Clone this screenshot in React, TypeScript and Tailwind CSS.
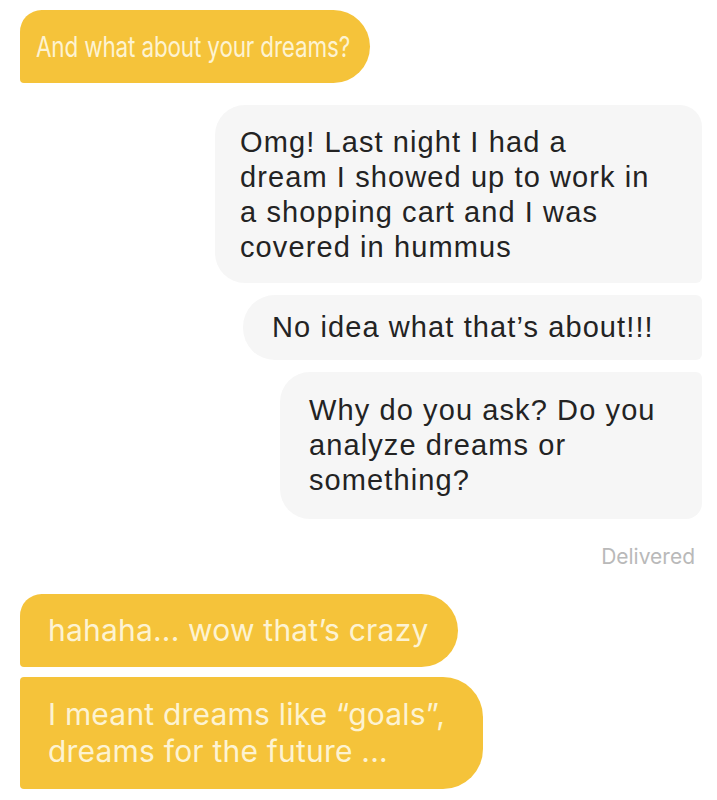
import React from "react";

const yellowText = "text-[#fdf3d2] font-['Inter',sans-serif]";
const grayText = "text-[#232323] font-['Liberation_Sans',Arial,sans-serif] tracking-[1.1px]";

function Lines({ lines }: { lines: string[] }) {
  return (
    <>
      {lines.map((l, i) => (
        <span key={i} className="block whitespace-nowrap">
          {l}
        </span>
      ))}
    </>
  );
}

export default function App() {
  return (
    <div className="w-[717px] h-[800px] bg-white overflow-hidden flex flex-col">
      {/* their question */}
      <div
        className={`ml-[20px] mt-[10px] w-[350px] h-[73px] bg-[#f5c33a] rounded-tl-[22px] rounded-bl-[4px] rounded-r-[37px] pl-[16px] flex items-center text-[29px] ${yellowText}`}
      >
        <span className="inline-block whitespace-nowrap origin-left scale-x-[0.775] tracking-[-0.2px]">
          And what about your dreams?
        </span>
      </div>

      {/* my replies */}
      <div className="flex flex-col items-end mr-[15px] mt-[22px] gap-[12px]">
        <div
          className={`w-[487px] h-[178px] bg-[#f6f6f6] rounded-l-[30px] rounded-tr-[22px] rounded-br-[6px] pl-[25px] pt-[2px] flex flex-col justify-center text-[29px] leading-[35px] ${grayText}`}
        >
          <Lines
            lines={[
              "Omg! Last night I had a",
              "dream I showed up to work in",
              "a shopping cart and I was",
              "covered in hummus",
            ]}
          />
        </div>
        <div
          className={`w-[459px] h-[65px] bg-[#f6f6f6] rounded-l-[32px] rounded-r-[6px] pl-[29px] flex items-center text-[29px] ${grayText}`}
        >
          No idea what that’s about!!!
        </div>
        <div
          className={`w-[422px] h-[147px] bg-[#f6f6f6] rounded-l-[30px] rounded-tr-[6px] rounded-br-[16px] pl-[29px] flex flex-col justify-center text-[29px] leading-[35px] ${grayText}`}
        >
          <Lines
            lines={[
              "Why do you ask? Do you",
              "analyze dreams or",
              "something?",
            ]}
          />
        </div>
      </div>
      <div className="flex justify-end pr-[22px] mt-[24px] text-[21px] leading-[28px] text-[#b9b9b9] font-['Inter',sans-serif]">
        Delivered
      </div>

      {/* their follow-ups */}
      <div className="flex flex-col items-start ml-[20px] mt-[23px] gap-[10px]">
        <div
          className={`w-[438px] h-[73px] bg-[#f5c33a] rounded-tl-[22px] rounded-bl-[4px] rounded-r-[37px] pl-[28px] flex items-center text-[30px] tracking-[0.2px] ${yellowText}`}
        >
          <span className="whitespace-nowrap">hahaha... wow that’s crazy</span>
        </div>
        <div
          className={`w-[463px] h-[112px] bg-[#f5c33a] rounded-l-[4px] rounded-r-[40px] pl-[28px] flex flex-col justify-center text-[30px] leading-[37px] tracking-[0.2px] ${yellowText}`}
        >
          <Lines
            lines={["I meant dreams like “goals”,", "dreams for the future ..."]}
          />
        </div>
      </div>
    </div>
  );
}
